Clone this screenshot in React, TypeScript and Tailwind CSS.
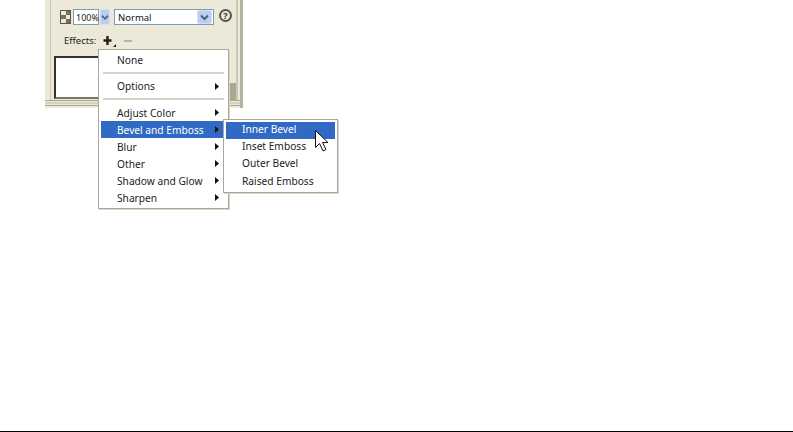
import React from "react";

const font = { fontFamily: '"Noto Sans", "DejaVu Sans", sans-serif' };

function Arrow() {
  return (
    <svg width="4" height="7" viewBox="0 0 4 7" className="block">
      <path d="M0 0L4 3.5L0 7Z" fill="currentColor" />
    </svg>
  );
}

function Chevron({ cls }: { cls: string }) {
  return (
    <div className={`${cls} flex items-center justify-center rounded-[2px] bg-[#bccdf0] border border-[#d3dff7]`}>
      <svg width="9" height="7" viewBox="0 0 9 7">
        <path d="M1 1.5L4.5 5L8 1.5" fill="none" stroke="#4d6185" strokeWidth="2" />
      </svg>
    </div>
  );
}

function Item({ label, arrow, active, pad }: { label: string; arrow?: boolean; active?: boolean; pad: string }) {
  return (
    <div className={`h-[17px] flex items-center pl-[16px] pr-[7px] ${active ? "bg-[#316ac5] text-white" : "text-[#222]"}`}>
      <span className={`flex-1 whitespace-nowrap ${pad}`}>{label}</span>
      {arrow && <span className="text-[#111]"><Arrow /></span>}
    </div>
  );
}

function Sep() {
  return <div className="mt-[3px] mb-[4px] mx-[2px] h-[2px] bg-[#d8d5c8]" />;
}

export default function App() {
  return (
    <div className="relative w-[793px] h-[432px] bg-white overflow-hidden text-[10.2px] leading-none" style={font}>
      <div className="flex flex-col h-full">
        <div className="flex-1 pl-[45px]">
          <div className="w-[198px] h-[108px] bg-[#ece9d8] border-r-[3px] border-[#b5b2a0] flex flex-col">
            <div className="h-[101px] pl-[5px] pr-[2px] border-b border-[#a9a692]">
              <div className="h-full border-l border-r-[2px] border-[#c9c6b4] flex flex-col">
                <div className="flex items-center h-[16px] mt-[9px] pl-[9px]">
                  <div className="w-[11px] h-[14px] grid grid-cols-2 grid-rows-3 border border-[#555] mr-[2px]">
                    <div className="bg-[#ece9d8]" /><div className="bg-[#77705c]" />
                    <div className="bg-[#77705c]" /><div className="bg-[#ece9d8]" />
                    <div className="bg-[#ece9d8]" /><div className="bg-[#77705c]" />
                  </div>
                  <div className="w-[26px] h-[16px] bg-white border border-[#7f9db9] flex items-center pl-[2px] pt-[1px] text-[9px] whitespace-nowrap text-[#222]">100%</div>
                  <Chevron cls="w-[10px] h-[16px] ml-[1px]" />
                  <div className="ml-[4px] w-[100px] h-[16px] bg-white border border-[#7f9db9] flex items-center justify-between pl-[3px] pr-[1px] text-[9.5px] text-[#111]">
                    <span className="pt-[1px]">Normal</span>
                    <Chevron cls="w-[15px] h-[14px]" />
                  </div>
                  <div className="ml-[5px] mb-[4px] w-[13px] h-[13px] rounded-full border-2 border-[#555] flex items-center justify-center text-[9px] font-bold text-[#333]">?</div>
                </div>
                <div className="flex items-center h-[16px] mt-[8px] pl-[13px] text-[#222] text-[9.5px]">
                  <span>Effects:</span>
                  <svg width="16" height="14" viewBox="0 0 16 14" className="ml-[6px]">
                    <path d="M5.5 2v9M1.5 6.5h8" stroke="#2a1a1a" strokeWidth="2.4" />
                    <path d="M14 10v3h-3Z" fill="#222" />
                  </svg>
                  <div className="ml-[6px] w-[8px] h-[2px] bg-[#b5b3a5]" />
                </div>
                <div className="flex-1 flex items-end justify-between mt-[7px]">
                  <div className="ml-[3px] mb-[1px] w-[60px] h-[43px] bg-white border-l-2 border-t-2 border-[#333] border-b-2 border-b-[#77756a]" />
                  <div className="w-[8px] h-[17px] bg-[#aaa795] flex items-center pb-[2px]">
                    <div className="w-[2px] h-[2px] bg-[#333]" />
                  </div>
                </div>
              </div>
            </div>
            <div className="h-[2px] mt-[1px] bg-[#d5d2c0]" />
            <div className="h-[1px] mt-[1px] bg-[#a9a692]" />
          </div>
        </div>
        <div className="h-[1px] bg-black" />
      </div>

      <div className="absolute left-[98px] top-[49px] w-[131px] bg-white border border-[#aca899] px-[2px] py-[2px] shadow-[1px_1px_0_#d8d6cc]">
        <Item label="None" pad="pb-[1px]" />
        <Sep />
        <Item label="Options" arrow pad="pb-[1px]" />
        <Sep />
        <Item label="Adjust Color" arrow pad="pt-[1px]" />
        <Item label="Bevel and Emboss" arrow active pad="pt-[1px]" />
        <Item label="Blur" arrow pad="pt-[1px]" />
        <Item label="Other" arrow pad="pt-[1px]" />
        <Item label="Shadow and Glow" arrow pad="pt-[1px]" />
        <Item label="Sharpen" arrow pad="pt-[1px]" />
      </div>

      <div className="absolute left-[223px] top-[119px] w-[115px] bg-white border border-[#aca899] p-[2px] shadow-[1px_1px_0_#d8d6cc]">
        <Item label="Inner Bevel" active pad="pb-[3px]" />
        <Item label="Inset Emboss" pad="pb-[3px]" />
        <Item label="Outer Bevel" pad="pb-[3px]" />
        <Item label="Raised Emboss" pad="pb-[1px]" />
      </div>

      <svg width="18" height="24" viewBox="0 0 18 24" className="absolute left-[314px] top-[129px]">
        <path d="M1.5 1.5V18.5L5.5 14.5L9 22L12 20.5L8.5 13.5H14Z" fill="#fff" stroke="#111" strokeWidth="1" />
      </svg>
    </div>
  );
}
